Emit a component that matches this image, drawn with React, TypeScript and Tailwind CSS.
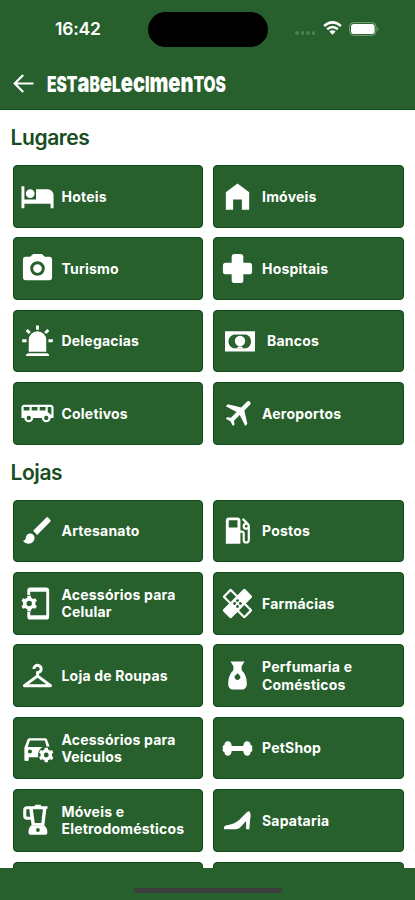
import type { ReactNode } from "react";
import { MdCheckroom, MdHealing, MdLocalGasStation } from "react-icons/md";

interface iGlyphProps {
  d: string;
  children?: ReactNode;
}

const Glyph = ({ d, children }: iGlyphProps) => (
  <svg viewBox="0 0 24 24" width={35} height={35} fill="currentColor" fillRule="evenodd" className="shrink-0">
    <path d={d} />
    {children}
  </svg>
);

const Bed = <Glyph d="M19 7H11V14H3V5H1V20H3V17H21V20H23V11A4 4 0 0 0 19 7M7 13A3 3 0 0 0 10 10A3 3 0 0 0 7 7A3 3 0 0 0 4 10A3 3 0 0 0 7 13Z" />;
const Home = <Glyph d="M12 3L20 9V21H15V14H9V21H4V9L12 3Z" />;
const Camera = <Glyph d="M4 4H7L9 2H15L17 4H20A2 2 0 0 1 22 6V18A2 2 0 0 1 20 20H4A2 2 0 0 1 2 18V6A2 2 0 0 1 4 4M12 7A5 5 0 0 0 7 12A5 5 0 0 0 12 17A5 5 0 0 0 17 12A5 5 0 0 0 12 7M12 9A3 3 0 0 1 15 12A3 3 0 0 1 12 15A3 3 0 0 1 9 12A3 3 0 0 1 12 9Z" />;
const Cross = <Glyph d="M10 2H14A2 2 0 0 1 16 4V8H20A2 2 0 0 1 22 10V14A2 2 0 0 1 20 16H16V20A2 2 0 0 1 14 22H10A2 2 0 0 1 8 20V16H4A2 2 0 0 1 2 14V10A2 2 0 0 1 4 8H8V4A2 2 0 0 1 10 2Z" />;
const Siren = <Glyph d="M6 6.9L3.87 4.78L5.28 3.37L7.4 5.5L6 6.9M13 1V4H11V1H13M20.13 4.78L18 6.9L16.6 5.5L18.72 3.37L20.13 4.78M4.5 10.5V12.5H1.5V10.5H4.5M19.5 10.5H22.5V12.5H19.5V10.5M6 20H18A2 2 0 0 1 20 22H4A2 2 0 0 1 6 20M12 5A6 6 0 0 1 18 11V19H6V11A6 6 0 0 1 12 5Z" />;
const Bus = <Glyph d="M3 6C1.89 6 1 6.89 1 8V15H3A3 3 0 0 0 6 18A3 3 0 0 0 9 15H15A3 3 0 0 0 18 18A3 3 0 0 0 21 15H23V8C23 6.89 22.11 6 21 6H3M2.5 7.5H6.5V10H2.5V7.5M8 7.5H12V10H8V7.5M13.5 7.5H17.5V10H13.5V7.5M19 7.5H21.5V13L19 11V7.5M6 13.5A1.5 1.5 0 0 1 7.5 15A1.5 1.5 0 0 1 6 16.5A1.5 1.5 0 0 1 4.5 15A1.5 1.5 0 0 1 6 13.5M18 13.5A1.5 1.5 0 0 1 19.5 15A1.5 1.5 0 0 1 18 16.5A1.5 1.5 0 0 1 16.5 15A1.5 1.5 0 0 1 18 13.5Z" />;
const Plane = <Glyph d="M20.56 3.91C21.15 4.5 21.15 5.45 20.56 6.03L16.67 9.92L18.79 19.11L17.38 20.53L13.5 13.1L9.6 17L9.96 19.47L8.89 20.53L7.13 17.35L3.94 15.58L5 14.5L7.5 14.87L11.37 11L3.94 7.09L5.36 5.68L14.55 7.8L18.44 3.91C19 3.33 20 3.33 20.56 3.91Z" />;
const Brush = <Glyph d="M20.71 4.63L19.37 3.29C19 2.9 18.35 2.9 17.96 3.29L9 12.25L11.75 15L20.71 6.04C21.1 5.65 21.1 5 20.71 4.63M7 14A3 3 0 0 0 4 17C4 18.31 2.84 19 2 19C2.92 20.22 4.5 21 6 21A4 4 0 0 0 10 17A3 3 0 0 0 7 14Z" />;
const Vase = <Glyph d="M7.2 2.4H16.8L14.8 5.6V8.2C17.2 10.4 18.4 14 18.4 17.6C18.4 20.2 17 21.6 14.8 21.6H9.2C7 21.6 5.6 20.2 5.6 17.6C5.6 14 6.8 10.4 9.2 8.2V5.6ZM12 10.4L10.8 11.6A1.9 1.9 0 1 0 13.2 11.6Z" />;
const Bone = <Glyph d="M8 10.3H16C16 9 16.8 7.1 18.6 7.1C20 7.1 21 8.1 20.9 9.5C22.4 10 22.5 11.2 21.9 12C22.5 12.8 22.4 14 20.9 14.5C21 15.9 20 16.9 18.6 16.9C16.8 16.9 16 15 16 13.7H8C8 15 7.2 16.9 5.4 16.9C4 16.9 3 15.9 3.1 14.5C1.6 14 1.5 12.8 2.1 12C1.5 11.2 1.6 10 3.1 9.5C3 8.1 4 7.1 5.4 7.1C7.2 7.1 8 9 8 10.3Z" />;
const Heel = <Glyph d="M20.2 5.6C21 7.1 21.3 9 20.7 10.7L20.1 18H17.9V12.3L14.8 15.8C13.3 17.5 12.6 18 10.5 18H2.8C2.5 16.7 2.9 15.7 4.3 15.3C8.4 14.6 10.6 13.8 13.1 11.6L18.2 6.5C18.9 5.9 19.5 5.6 20.2 5.6Z" />;

const cog = "M-1-5H1L1.3-3.7L2.6-2.9L3.9-3.4L4.9-1.7L3.9-.8V.8L4.9 1.7L3.9 3.4L2.6 2.9L1.3 3.7L1 5H-1L-1.3 3.7L-2.6 2.9L-3.9 3.4L-4.9 1.7L-3.9 .8V-.8L-4.9-1.7L-3.9-3.4L-2.6-2.9L-1.3-3.7ZM0-1.7A1.7 1.7 0 1 0 0 1.7A1.7 1.7 0 1 0 0-1.7Z";

const PhoneCog = (
  <Glyph d="M7 1H18A2 2 0 0 1 20 3V21A2 2 0 0 1 18 23H7A2 2 0 0 1 5 21V17.8H7V20H18V4H7V6.2H5V3A2 2 0 0 1 7 1Z">
    <path transform="translate(6.3 12) scale(1.08)" d={cog} />
  </Glyph>
);

const CarCog = (
  <Glyph d="M6.5 5H17.2C17.9 5 18.4 5.4 18.6 6L20.3 10.7H18.2L17 6.5H6.8L5.3 11H15.5C13.5 12.2 12.4 14.2 12.4 16.4C12.4 17.1 12.5 17.5 12.6 18H6V19.5C6 20.1 5.6 20.6 5 20.6H4C3.4 20.6 3 20.1 3 19.5V11.5L5.1 6C5.3 5.4 5.9 5 6.5 5ZM6.8 12.7A1.4 1.4 0 1 0 6.8 15.5A1.4 1.4 0 1 0 6.8 12.7Z">
    <path transform="translate(18 16.4)" d={cog} />
  </Glyph>
);

const Blender = (
  <Glyph d="M7.8 15.2H16.5C18.1 16.3 18.8 18.1 18.8 20.2C18.8 21.1 18.1 21.8 17.2 21.8H7.4C6.5 21.8 5.8 21.1 5.8 20.2C5.8 18.1 6.3 16.4 7.8 15.2ZM12.3 17.2A1.3 1.3 0 1 0 12.3 19.8A1.3 1.3 0 1 0 12.3 17.2Z">
    <path d="M10 2.2C10 1.6 10.4 1.2 11 1.2H13.6C14.2 1.2 14.6 1.6 14.6 2.2H18.9V4H18.1L16.7 15.5H8L7.4 11.4H4.7C3.3 11.4 2.2 10.5 2.2 9V4.6C2.2 3.1 3.3 2.2 4.7 2.2ZM6.4 4.2H5C4.6 4.2 4.3 4.5 4.3 4.8V8.8C4.3 9.1 4.6 9.4 5 9.4H7ZM8.8 4.2L10.1 13.7H14.6L15.7 4.2Z" />
  </Glyph>
);

const Money = (
  <svg viewBox="0 0 40 35" width={40} height={35} className="shrink-0" fill="currentColor">
    <path fillRule="evenodd" d="M5 7.3H35V27.5H5ZM14 10.5C10.8 11.5 8.5 14 8.5 17.4S10.8 23.3 14 24.3H26C29.2 23.3 31 20.8 31 17.4S29.2 11.5 26 10.5Z" />
    <circle cx="20" cy="17" r="5.2" />
    <path d="M15.5 11.5Q11.6 13 11.6 17.4T15.5 23.3M24.5 11.5Q28.1 13 28.1 17.4T24.5 23.3" fill="none" stroke="#3f7545" strokeWidth=".6" />
    <path d="M16.5 24.3Q20 20.2 23.5 24.3Z" />
  </svg>
);

interface iItem {
  label: string;
  icon: ReactNode;
}

const lugares: iItem[] = [
  { label: "Hoteis", icon: Bed },
  { label: "Imóveis", icon: Home },
  { label: "Turismo", icon: Camera },
  { label: "Hospitais", icon: Cross },
  { label: "Delegacias", icon: Siren },
  { label: "Bancos", icon: Money },
  { label: "Coletivos", icon: Bus },
  { label: "Aeroportos", icon: Plane },
];

const lojas: iItem[] = [
  { label: "Artesanato", icon: Brush },
  { label: "Postos", icon: <MdLocalGasStation size={35} className="shrink-0" /> },
  { label: "Acessórios para Celular", icon: PhoneCog },
  { label: "Farmácias", icon: <MdHealing size={35} className="shrink-0" /> },
  { label: "Loja de Roupas", icon: <MdCheckroom size={35} className="shrink-0" /> },
  { label: "Perfumaria e Comésticos", icon: Vase },
  { label: "Acessórios para Veículos", icon: CarCog },
  { label: "PetShop", icon: Bone },
  { label: "Móveis e Eletrodomésticos", icon: Blender },
  { label: "Sapataria", icon: Heel },
  { label: "", icon: null },
  { label: "", icon: null },
];

const Section = ({ title, items }: { title: string; items: iItem[] }) => (
  <section>
    <h2 className="h-[55px] pl-[10.5px] pt-[13px] text-[21px] leading-[30px] font-semibold tracking-[-0.4px] text-[#174d20]">{title}</h2>
    <div className="grid grid-cols-2 gap-x-[10px] gap-y-[9.9px] pl-[12.5px] pr-[11.5px]">
      {items.map((item, i) => (
        <div
          key={i}
          className="flex h-[62.5px] items-center gap-[7px] rounded-[4px] border border-[#104d16] bg-[#27602c] pl-[6px] text-white"
        >
          {item.icon}
          <span className="text-[14px] leading-[17.5px] font-bold tracking-[0.2px]">{item.label}</span>
        </div>
      ))}
    </div>
  </section>
);

const StatusBar = () => (
  <div className="flex h-[58px] items-center">
    <span className="w-[148px] pl-[55px] text-[17.5px] leading-none font-semibold tracking-[-0.2px]">16:42</span>
    <div className="mt-[1px] h-[35px] w-[120px] rounded-full bg-black" />
    <div className="ml-[27px] mt-[8px] flex gap-[2px]">
      {[0, 1, 2, 3].map((n) => (
        <i key={n} className="size-[3.5px] rounded-full bg-[#4c8050]" />
      ))}
    </div>
    <svg width="19" height="14" viewBox="0 0 19 14" className="ml-[8px] -mt-[2px]" fill="none" stroke="white" strokeWidth="2.5">
      <path d="M1.1 5Q9.5-2.3 17.9 5M4.2 8.2Q9.5 3.7 14.8 8.2" />
      <path d="M6.4 10.5Q9.5 7.9 12.6 10.5L9.5 13.7Z" fill="white" stroke="none" />
    </svg>
    <svg width="31" height="14" viewBox="0 0 31 14" className="ml-[7px] -mt-[1px]">
      <rect x=".6" y=".6" width="26.4" height="12.8" rx="4" fill="none" stroke="#7ba07d" />
      <rect x="2" y="2" width="23.6" height="10" rx="2.8" fill="white" />
      <path d="M28.4 4.8Q30.7 7 28.4 9.2Z" fill="#7ba07d" />
    </svg>
  </div>
);

// unicase lettering: small letters are drawn as tall as the capitals
const Title = () => (
  <h1 className="w-[179px] text-[21px] leading-[24px] font-black whitespace-nowrap">
    <span className="block origin-left scale-x-[0.74]">
      <span className="uppercase">Est</span>
      <span className="text-[27px]">a</span>
      <span className="uppercase">b</span>
      <span className="text-[27px]">e</span>
      <span className="uppercase">l</span>
      <span className="text-[27px]">ec</span>
      <span className="uppercase">i</span>
      <span className="text-[27px]">men</span>
      <span className="uppercase">tos</span>
    </span>
  </h1>
);

const App = () => {
  return (
    <div className="flex h-[900px] w-[415px] flex-col overflow-hidden bg-white font-['Inter',sans-serif]">
      <header className="h-[110px] shrink-0 border-b border-[#12511a] bg-[#27602c] text-white">
        <StatusBar />
        <div className="flex h-[51px] items-center pl-[13px]">
          <svg width="21" height="19" viewBox="0 0 21 19" fill="none" stroke="currentColor" strokeWidth="2.2" className="shrink-0">
            <path d="M20.5 9.5H2M10.2 1L1.7 9.5L10.2 18" />
          </svg>
          <div className="ml-[13px]">
            <Title />
          </div>
        </div>
      </header>
      <main className="min-h-0 flex-1 overflow-hidden">
        <Section title="Lugares" items={lugares} />
        <Section title="Lojas" items={lojas} />
      </main>
      <footer className="flex h-[32px] shrink-0 justify-center bg-[#27602c] pt-[20px]">
        <div className="h-[5px] w-[148px] rounded-full bg-[#3b3e3b]" />
      </footer>
    </div>
  );
};

export default App;
